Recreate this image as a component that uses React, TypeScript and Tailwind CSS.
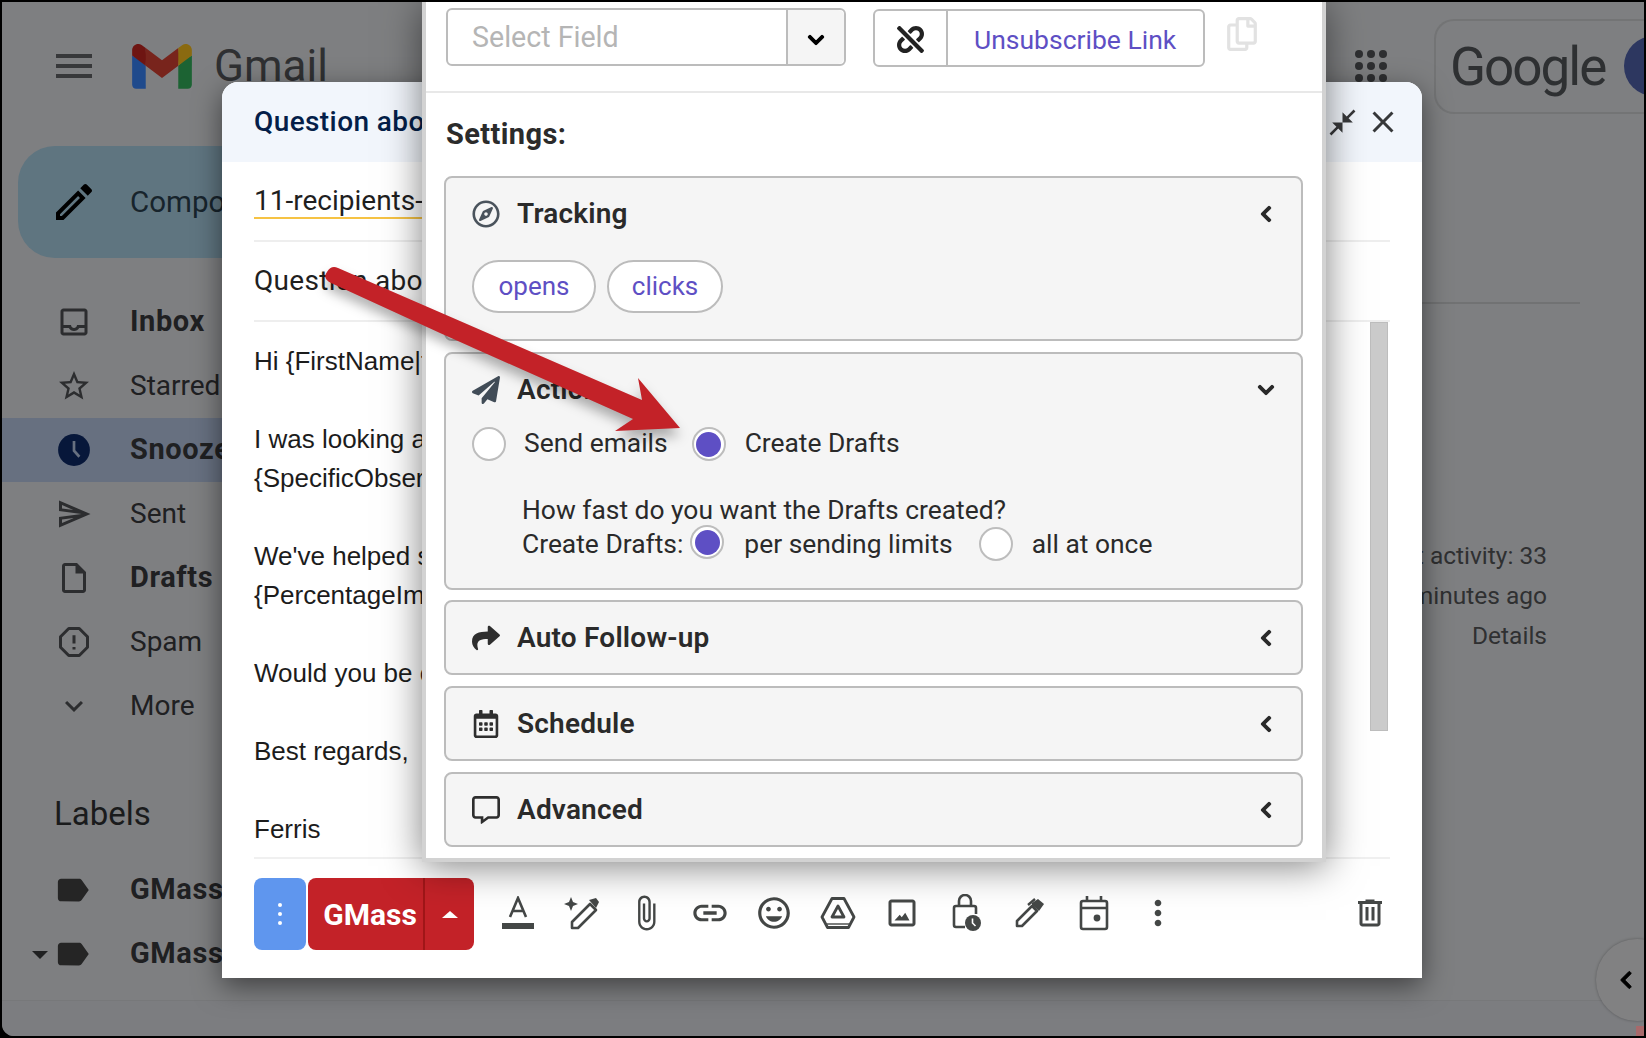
import type { ReactNode } from "react";
import {
  FaChevronDown,
  FaChevronLeft,
  FaPaperPlane,
  FaRegCalendarAlt,
  FaRegCommentAlt,
  FaRegCompass,
  FaRegCopy,
  FaShare,
  FaUnlink,
} from "react-icons/fa";

function Mi({ d, className }: { d: string; className?: string }) {
  return (
    <svg viewBox="0 0 24 24" fill="currentColor" className={className}>
      <path d={d} />
    </svg>
  );
}

function GmailLogo() {
  return (
    <svg viewBox="0 0 256 193" className="w-[60px] h-[45px]">
      <path fill="#1f4a8c" d="M58.182 192.05V93.14L27.507 65.077 0 49.504v125.091c0 9.658 7.825 17.455 17.455 17.455h40.727Z" />
      <path fill="#1c6333" d="M197.818 192.05h40.727c9.659 0 17.455-7.826 17.455-17.455V49.505l-31.156 17.837-27.026 25.798v98.91Z" />
      <path fill="#78241c" d="m58.182 93.14-4.174-38.647 4.174-36.989L128 69.868l69.818-52.364 4.669 34.992-4.669 40.644L128 145.504z" />
      <path fill="#8a6a10" d="M197.818 17.504V93.14L256 49.504V26.231c0-21.585-24.64-33.89-41.89-20.945l-16.292 12.218Z" />
      <path fill="#6e1512" d="m0 49.504 26.759 20.07L58.182 93.14V17.504L41.89 5.286C24.61-7.66 0 4.646 0 26.23v23.273Z" />
    </svg>
  );
}

function NavRow({ icon, label, bold, active, caret }: { icon: ReactNode; label: string; bold?: boolean; active?: boolean; caret?: boolean }) {
  return (
    <div className={`relative h-16 flex items-center pl-[54px] rounded-r-full ${active ? "bg-[#677080]" : ""}`}>
      {caret && <div className="absolute left-[30px] top-[29px] w-0 h-0 border-x-[8px] border-x-transparent border-t-[8px] border-t-[#1f2021]" />}
      <div className="w-9 h-9 flex items-center justify-center text-[#2c2d2f] shrink-0">{icon}</div>
      <span className={`ml-[38px] text-[#1f2022] whitespace-nowrap ${bold ? "text-[29px] tracking-[0.6px] font-bold" : "text-[28px]"}`}>{label}</span>
    </div>
  );
}

function Sidebar() {
  const ic = "w-9 h-9";
  const label = "M17.63 5.84C17.27 5.33 16.67 5 16 5L5 5.01C3.9 5.01 3 5.9 3 7v10c0 1.1.9 1.99 2 1.99L16 19c.67 0 1.27-.33 1.63-.84L22 12l-4.37-6.16z";
  return (
    <div className="w-[300px] shrink-0 flex flex-col">
      <div className="mt-4 ml-4 h-28 w-[290px] rounded-[37px] bg-[#5f7580] flex items-center pl-[38px]">
        <Mi className="w-12 h-12 -ml-[6px] text-black" d="M3 17.25V21h3.75L17.81 9.94l-3.75-3.75L3 17.25zM5.92 19H5v-.92l9.06-9.06.92.92L5.92 19zM20.71 5.63l-2.34-2.34c-.39-.39-1.02-.39-1.41 0l-1.83 1.83 3.75 3.75 1.83-1.83c.39-.39.39-1.02 0-1.41z" />
        <span className="ml-[32px] text-[29.5px] text-[#17242c]">Compose</span>
      </div>
      <div className="mt-8">
        <NavRow bold label="Inbox" icon={<Mi className={ic} d="M19 3H5c-1.1 0-2 .9-2 2v14c0 1.1.9 2 2 2h14c1.1 0 2-.9 2-2V5c0-1.1-.9-2-2-2zm0 16H5v-3h3.56c.69 1.19 1.97 2 3.45 2s2.75-.81 3.45-2H19v3zm0-5h-4.99c0 1.1-.9 2-2 2s-2-.9-2-2H5V5h14v9z" />} />
        <NavRow label="Starred" icon={<Mi className={ic} d="M22 9.24l-7.19-.62L12 2 9.19 8.63 2 9.24l5.46 4.73L5.82 21 12 17.27 18.18 21l-1.63-7.03L22 9.24zM12 15.4l-3.76 2.27 1-4.28-3.32-2.88 4.38-.38L12 6.1l1.71 4.04 4.38.38-3.32 2.88 1 4.28L12 15.4z" />} />
        <NavRow
          bold
          active
          label="Snoozed"
          icon={
            <svg viewBox="0 0 24 24" className={ic}>
              <circle cx="12" cy="12" r="10.6" fill="#07173a" />
              <path d="M12 6v6.5l3.6 4" fill="none" stroke="#677080" strokeWidth="1.8" />
            </svg>
          }
        />
        <NavRow label="Sent" icon={<Mi className={ic} d="M4.01 6.03l7.51 3.22-7.52-1 .01-2.22m7.5 8.72L4 17.97v-2.22l7.51-1M2.01 3L2 10l15 2-15 2 .01 7L23 12 2.01 3z" />} />
        <NavRow bold label="Drafts" icon={<Mi className={ic} d="M14 2H6c-1.1 0-1.99.9-1.99 2L4 20c0 1.1.89 2 1.99 2H18c1.1 0 2-.9 2-2V8l-6-6zM6 20V4h7v5h5v11H6z" />} />
        <NavRow
          label="Spam"
          icon={
            <svg viewBox="0 0 24 24" className={ic} fill="none" stroke="currentColor" strokeWidth="2">
              <path d="M8.5 3h7L21 8.5v7L15.5 21h-7L3 15.5v-7z" strokeLinejoin="round" />
              <path d="M12 7.5v5.5M12 15.4v1.6" />
            </svg>
          }
        />
        <NavRow label="More" icon={<Mi className={ic} d="M16.59 8.59L12 13.17 7.41 8.59 6 10l6 6 6-6z" />} />
      </div>
      <div className="mt-14 h-10 pl-[52px] text-[33px] leading-10 text-[#1a1b1c]">Labels</div>
      <div className="mt-6">
        <NavRow bold label="GMass" icon={<Mi className="w-10 h-10 -ml-[3px] text-[#252525]" d={label} />} />
        <NavRow bold caret label="GMass" icon={<Mi className="w-10 h-10 -ml-[3px] text-[#252525]" d={label} />} />
      </div>
    </div>
  );
}

function Background() {
  return (
    <div className="h-full rounded-bl-xl bg-[#7e7f81] flex flex-col overflow-hidden">
      <div className="h-32 shrink-0 flex items-center pl-[48px]">
        <Mi className="w-12 h-12 text-[#37383a]" d="M3 18h18v-2H3v2zm0-5h18v-2H3v2zm0-7v2h18V6H3z" />
        <div className="ml-[34px]">
          <GmailLogo />
        </div>
        <span className="ml-[22px] text-[44px] text-[#2f3032]">Gmail</span>
        <div className="ml-auto mr-[47px] grid grid-cols-3 gap-x-[4px] gap-y-[4px]">
          {Array.from({ length: 9 }).map((_, i) => (
            <div key={i} className="w-2 h-2 rounded-full bg-[#2e2f31]" />
          ))}
        </div>
        <div className="w-[210px] h-[95px] rounded-l-[20px] border-y-2 border-l-2 border-[#737475] flex items-center pl-[14px] overflow-hidden">
          <span className="pt-[4px] text-[53px] tracking-[-2px] text-[#2e3032]">Google</span>
          <div className="ml-[19px] w-[60px] h-[60px] rounded-full bg-[#2d3760] shrink-0" />
        </div>
      </div>
      <div className="flex-1 flex min-h-0">
        <Sidebar />
        <div className="flex-1 flex flex-col pr-16">
          <div className="mt-[172px] h-[2px] bg-[#717273]" />
          <div className="mt-[232px] pr-[33px] text-right text-[24.5px] leading-10 text-[#2f3031]">
            <div>Last account activity: 33</div>
            <div>minutes ago</div>
            <div>Details</div>
          </div>
        </div>
      </div>
      <div className="h-9 shrink-0 border-t border-[#77787a] bg-[#7c7d80]" />
    </div>
  );
}

const bodyLines = [
  "Hi {FirstName|there},",
  "",
  "I was looking at",
  "{SpecificObservation}",
  "",
  "We've helped similar",
  "{PercentageImprovement}",
  "",
  "Would you be open",
  "",
  "Best regards,",
  "",
  "Ferris",
];

function ToolIcon({ children }: { children: ReactNode }) {
  return <div className="w-16 h-9 flex items-center justify-center text-[#444746]">{children}</div>;
}

function Toolbar() {
  return (
    <div className="h-[121px] border-t-2 border-[#f0f0f0] pt-[19px] flex items-start">
      <div className="w-[52px] h-[72px] rounded-lg bg-[#5f96ee] flex flex-col items-center justify-center gap-[5px]">
        <div className="w-[4px] h-[4px] rounded-full bg-white" />
        <div className="w-[4px] h-[4px] rounded-full bg-white" />
        <div className="w-[4px] h-[4px] rounded-full bg-white" />
      </div>
      <div className="ml-[2px] w-[166px] h-[72px] rounded-lg bg-[#c32228] flex text-white">
        <div className="w-[117px] border-r-2 border-[#a01618] flex items-center justify-center text-[30px] font-bold pl-[9px]">GMass</div>
        <div className="flex-1 flex items-center justify-center">
          <div className="w-0 h-0 border-x-[8px] border-x-transparent border-b-[7px] border-b-white" />
        </div>
      </div>
      <div className="ml-3 mt-[17px] flex">
        <ToolIcon>
          <svg viewBox="0 0 32 34" className="w-8 h-[34px]">
            <path d="M8 21 16 2l8 19M11 15h10" fill="none" stroke="currentColor" strokeWidth="2.6" />
            <rect x="0" y="27" width="32" height="6" fill="currentColor" />
          </svg>
        </ToolIcon>
        <ToolIcon>
          <svg viewBox="0 0 36 34" className="w-9 h-[34px]">
            <path d="M7 1l2 5 5 2-5 2-2 5-2-5-5-2 5-2z" fill="currentColor" />
            <path d="M8 32v-6L26 8l6 6-18 18z" fill="none" stroke="currentColor" strokeWidth="2.6" strokeLinejoin="round" />
            <path d="M25 4l7-2 3 4-3 6z" fill="currentColor" />
          </svg>
        </ToolIcon>
        <ToolIcon>
          <Mi className="w-[38px] h-[38px]" d="M16.5 6v11.5c0 2.21-1.79 4-4 4s-4-1.79-4-4V5c0-1.38 1.12-2.5 2.5-2.5s2.5 1.12 2.5 2.5v10.5c0 .55-.45 1-1 1s-1-.45-1-1V6H10v9.5c0 1.38 1.12 2.5 2.5 2.5s2.5-1.12 2.5-2.5V5c0-2.21-1.79-4-4-4S7 2.79 7 5v12.5c0 3.04 2.46 5.5 5.5 5.5s5.5-2.46 5.5-5.5V6h-1.5z" />
        </ToolIcon>
        <ToolIcon>
          <Mi className="w-10 h-10" d="M3.9 12c0-1.71 1.39-3.1 3.1-3.1h4V7H7c-2.76 0-5 2.24-5 5s2.24 5 5 5h4v-1.9H7c-1.71 0-3.1-1.39-3.1-3.1zM8 13h8v-2H8v2zm9-6h-4v1.9h4c1.71 0 3.1 1.39 3.1 3.1s-1.39 3.1-3.1 3.1h-4V17h4c2.76 0 5-2.24 5-5s-2.24-5-5-5z" />
        </ToolIcon>
        <ToolIcon>
          <Mi className="w-[38px] h-[38px]" d="M11.99 2C6.47 2 2 6.48 2 12s4.47 10 9.99 10C17.52 22 22 17.52 22 12S17.52 2 11.99 2zM12 20c-4.42 0-8-3.58-8-8s3.58-8 8-8 8 3.58 8 8-3.58 8-8 8zm3.5-9c.83 0 1.5-.67 1.5-1.5S16.33 8 15.5 8 14 8.67 14 9.5s.67 1.5 1.5 1.5zm-7 0c.83 0 1.5-.67 1.5-1.5S9.33 8 8.5 8 7 8.67 7 9.5 7.67 11 8.5 11zm3.5 6.5c2.33 0 4.31-1.46 5.11-3.5H6.89c.8 2.04 2.78 3.5 5.11 3.5z" />
        </ToolIcon>
        <ToolIcon>
          <svg viewBox="0 0 36 32" className="w-9 h-8" fill="none" stroke="currentColor" strokeWidth="2.8" strokeLinejoin="round">
            <path d="M12 1.5h12L34 20l-5.5 10.5h-21L2 20z" />
            <path d="M18 9l6 11H12z" />
            <path d="M7 27h22" strokeWidth="1.4" />
          </svg>
        </ToolIcon>
        <ToolIcon>
          <Mi className="w-9 h-9" d="M19 5v14H5V5h14m0-2H5c-1.1 0-2 .9-2 2v14c0 1.1.9 2 2 2h14c1.1 0 2-.9 2-2V5c0-1.1-.9-2-2-2zM14.14 11.86l-2.3 3-1.34-1.72L7 17h10l-2.86-5.14z" />
        </ToolIcon>
        <ToolIcon>
          <svg viewBox="0 0 30 38" className="w-[30px] h-[38px]">
            <path d="M8 12V7a6 6 0 0 1 12 0v5" fill="none" stroke="currentColor" strokeWidth="2.6" />
            <path d="M14 33H5a2 2 0 0 1-2-2V14a2 2 0 0 1 2-2h18a2 2 0 0 1 2 2v6" fill="none" stroke="currentColor" strokeWidth="2.6" />
            <circle cx="22" cy="29" r="8" fill="currentColor" />
            <path d="M21.5 24.5V29l3 3" fill="none" stroke="#fff" strokeWidth="1.6" />
          </svg>
        </ToolIcon>
        <ToolIcon>
          <svg viewBox="0 0 30 30" className="w-[30px] h-[30px]">
            <path d="M2 28v-5L17 8l5 5L7 28z" fill="none" stroke="currentColor" strokeWidth="2.6" strokeLinejoin="round" />
            <path d="M17 5l6-4 6 5-5 7-7-6z" fill="currentColor" />
            <path d="M13 7l7-6" stroke="currentColor" strokeWidth="2.4" />
          </svg>
        </ToolIcon>
        <ToolIcon>
          <svg viewBox="0 0 30 36" className="w-[30px] h-9" fill="none" stroke="currentColor" strokeWidth="2.6">
            <rect x="2" y="6" width="26" height="28" rx="2" />
            <path d="M2 13h26M8 1v5M22 1v5" />
            <circle cx="18" cy="23" r="3.4" fill="currentColor" stroke="none" />
          </svg>
        </ToolIcon>
        <ToolIcon>
          <Mi className="w-10 h-10" d="M12 8c1.1 0 2-.9 2-2s-.9-2-2-2-2 .9-2 2 .9 2 2 2zm0 2c-1.1 0-2 .9-2 2s.9 2 2 2 2-.9 2-2-.9-2-2-2zm0 6c-1.1 0-2 .9-2 2s.9 2 2 2 2-.9 2-2-.9-2-2-2z" />
        </ToolIcon>
      </div>
      <div className="ml-auto mt-[17px] mr-[2px] w-9 h-9 text-[#444746]">
        <Mi className="w-9 h-9" d="M15 4V3H9v1H4v2h1v13c0 1.1.9 2 2 2h10c1.1 0 2-.9 2-2V6h1V4h-5zm2 15H7V6h10v13zM9 8h2v9H9zm4 0h2v9h-2z" />
      </div>
    </div>
  );
}

function ComposeWindow() {
  return (
    <div className="absolute left-[222px] top-[82px] w-[1200px] h-[896px] rounded-t-2xl bg-white shadow-[0_8px_28px_rgba(0,0,0,0.5)] flex flex-col overflow-hidden">
      <div className="h-20 shrink-0 bg-[#f2f6fc] flex items-center justify-between pl-8 pr-[21px]">
        <span className="text-[28px] tracking-[0.4px] font-medium text-[#041e49]">Question about</span>
        <div className="flex items-center gap-[7px] text-[#37383a]">
          <Mi className="w-[31px] h-[31px]" d="M22 3.41l-5.29 5.29L20 12h-8V4l3.29 3.29L20.59 2 22 3.41zM3.41 22l5.29-5.29L12 20v-8H4l3.29 3.29L2 20.59 3.41 22z" />
          <Mi className="w-9 h-9" d="M19 6.41L17.59 5 12 10.59 6.41 5 5 6.41 10.59 12 5 17.59 6.41 19 12 13.41 17.59 19 19 17.59 13.41 12z" />
        </div>
      </div>
      <div className="flex-1 flex flex-col pl-8 pr-[32px] min-h-0">
        <div className="h-20 shrink-0 border-b-2 border-[#eeeeee] flex items-start pt-[21px]">
          <span className="h-9 border-b-2 border-[#f6c344] text-[28px] leading-9 text-[#1f1f1f] whitespace-nowrap">11-recipients-list</span>
        </div>
        <div className="h-20 shrink-0 border-b-2 border-[#eeeeee] flex items-center text-[28px] tracking-[0.3px] text-[#1f1f1f]">Question about</div>
        <div className="flex-1 flex justify-between min-h-0">
          <div className="pt-5 font-['Liberation_Sans',Arial,sans-serif] text-[26px] leading-[39px] text-[#1c1c1c] whitespace-nowrap">
            {bodyLines.map((line, i) => (
              <div key={i} className="h-[39px]">{line}</div>
            ))}
          </div>
          <div className="w-[18px] h-[409px] mr-[2px] bg-[#cbcbcb] border border-[#bdbdbd]" />
        </div>
        <Toolbar />
      </div>
    </div>
  );
}

function Radio({ checked, className }: { checked?: boolean; className?: string }) {
  return (
    <div className={`w-[34px] h-[34px] shrink-0 rounded-full border-2 border-[#bdbdbd] bg-white flex items-center justify-center ${className ?? ""}`}>
      {checked && <div className="w-[25px] h-[25px] rounded-full bg-[#5e4fc4]" />}
    </div>
  );
}

function Panel({ icon, label, open, className, children }: { icon: ReactNode; label: string; open?: boolean; className?: string; children?: ReactNode }) {
  return (
    <div className={`rounded-lg border-2 border-[#bcbcbc] bg-[#f5f5f5] ${className ?? ""}`}>
      <div className="h-[71px] flex items-center pl-[26px] pr-[26px]">
        <div className="w-[45px] text-[#2e2e2e]">{icon}</div>
        <span className="text-[28px] tracking-[0.2px] font-semibold text-[#2a2a2a]">{label}</span>
        <div className="ml-auto text-[#2a2a2a]">
          {open ? <FaChevronDown size={18} className="stroke-current stroke-[30]" /> : <FaChevronLeft size={18} className="stroke-current stroke-[30]" />}
        </div>
      </div>
      {children}
    </div>
  );
}

function SettingsPopup() {
  return (
    <div className="absolute left-[422px] top-[2px] w-[904px] h-[860px] bg-white border-x-4 border-b-4 border-[#d2d2d2] shadow-[0_4px_36px_rgba(0,0,0,0.5)]">
      <div className="h-[91px] border-b-2 border-[#e8e8e8] pl-[20px] pt-[6px] flex items-start">
        <div className="w-[400px] h-[58px] rounded-md border-2 border-[#bcbcbc] flex">
          <div className="flex-1 pl-[24px] flex items-center text-[28.6px] text-[#b5b5b5]">Select Field</div>
          <div className="w-[58px] pt-[5px] border-l-2 border-[#bcbcbc] bg-[#f5f5f5] rounded-r-md flex items-center justify-center text-black">
            <FaChevronDown size={18} className="stroke-current stroke-[30]" />
          </div>
        </div>
        <div className="ml-[27px] mt-[1px] w-[332px] h-[58px] rounded-md border-2 border-[#bcbcbc] flex">
          <div className="w-[73px] pt-[3px] border-r-2 border-[#bcbcbc] flex items-center justify-center text-[#222]">
            <FaUnlink size={27} />
          </div>
          <div className="flex-1 pl-[26px] pt-[3px] flex items-center text-[26.5px] text-[#5e4fc4]">Unsubscribe Link</div>
        </div>
        <div className="ml-[20px] mt-[9px] text-[#e2e2e2]">
          <FaRegCopy size={34} />
        </div>
      </div>
      <div className="h-[83px] pl-[20px] flex items-center text-[29px] tracking-[0.4px] font-bold text-[#2b2b2b]">Settings:</div>
      <div className="pl-[18px] pr-[19px] flex flex-col gap-3">
        <Panel label="Tracking" icon={<FaRegCompass size={28} className="text-[#4a535c]" />}>
          <div className="mt-[11px] pb-[26px] pl-[26px] flex gap-[11px]">
            <div className="w-[124px] h-[53px] rounded-full border-2 border-[#bcbcbc] bg-white flex items-center justify-center text-[26px] text-[#5e4fc4]">opens</div>
            <div className="w-[116px] h-[53px] rounded-full border-2 border-[#bcbcbc] bg-white flex items-center justify-center text-[26px] text-[#5e4fc4]">clicks</div>
          </div>
        </Panel>
        <Panel open className="-mt-[1px]" label="Action" icon={<FaPaperPlane size={28} className="text-[#414c57]" />}>
          <div className="pl-[26px] pb-[27px] text-[26.4px] text-[#2a2a2a]">
            <div className="mt-[1px] h-9 flex items-center">
              <Radio />
              <span className="ml-[18px]">Send emails</span>
              <Radio checked className="ml-[24px]" />
              <span className="ml-[19px]">Create Drafts</span>
            </div>
            <div className="mt-[31px] ml-[50px] leading-[34px]">
              <div>How fast do you want the Drafts created?</div>
              <div className="flex items-center h-[34px]">
                <span>Create Drafts:</span>
                <Radio checked className="ml-[7px] -mt-1" />
                <span className="ml-[20px]">per sending limits</span>
                <Radio className="ml-[26px]" />
                <span className="ml-[19px]">all at once</span>
              </div>
            </div>
          </div>
        </Panel>
        <Panel className="-mt-[2px]" label="Auto Follow-up" icon={<FaShare size={28} />} />
        <Panel className="-mt-[1px]" label="Schedule" icon={<FaRegCalendarAlt size={28} />} />
        <Panel className="-mt-[1px]" label="Advanced" icon={<FaRegCommentAlt size={28} />} />
      </div>
    </div>
  );
}

function RedArrow() {
  return (
    <svg viewBox="0 0 1646 1038" className="absolute inset-0 w-[1646px] h-[1038px] pointer-events-none drop-shadow-[0_8px_6px_rgba(0,0,0,0.3)]">
      <path d="M338 268 642 400 638 378 680 428 615 431 633 419 440 333 331 283Q322 278 327 272 331 265 338 268Z" fill="#c32228" />
    </svg>
  );
}

export default function App() {
  return (
    <div className="relative w-[1646px] h-[1038px] overflow-hidden bg-black p-[2px] font-['Roboto',sans-serif]">
      <Background />
      <ComposeWindow />
      <SettingsPopup />
      <RedArrow />
      <div className="absolute left-[1636px] top-[1026px] w-[8px] h-[10px] bg-[#a8696b]" />
      <div className="absolute left-[1596px] top-[939px] w-[82px] h-[82px] rounded-full bg-[#818182] shadow-[0_0_3px_rgba(0,0,0,0.3)] flex items-center pl-[20px] text-black">
        <FaChevronLeft size={20} className="stroke-current stroke-[20]" />
      </div>
      <div className="absolute left-[1644px] top-0 w-[2px] h-[1038px] bg-black" />
    </div>
  );
}
